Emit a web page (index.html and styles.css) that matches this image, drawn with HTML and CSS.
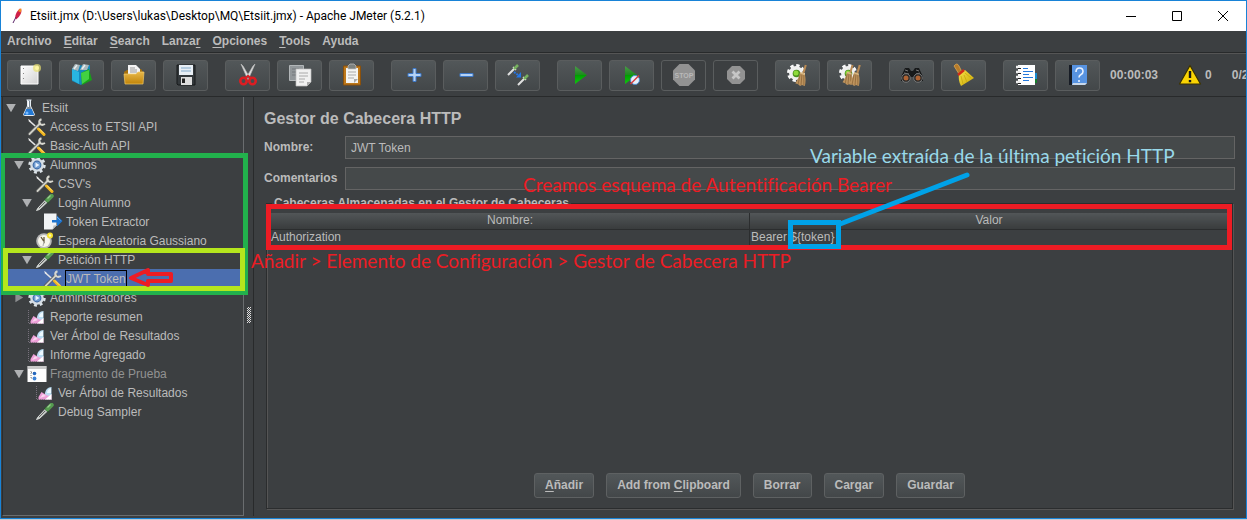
FILE: index.html
```html
<!DOCTYPE html>
<html lang="es">
<head>
<meta charset="utf-8">
<title>Etsiit.jmx - Apache JMeter (5.2.1)</title>
<link rel="stylesheet" href="styles.css">
</head>
<body>
<svg class="defs" aria-hidden="true">
  <defs>
    <linearGradient id="gGreen" x1="0" y1="0" x2="0" y2="1"><stop offset="0" stop-color="#4a9a4a"/><stop offset=".5" stop-color="#1d8a1d"/><stop offset=".52" stop-color="#00a000"/><stop offset="1" stop-color="#10c810"/></linearGradient>
    <linearGradient id="gPaper" x1="0" y1="0" x2="1" y2="1"><stop offset="0" stop-color="#fff"/><stop offset="1" stop-color="#d2d2d2"/></linearGradient>
    <linearGradient id="gFolder" x1="0" y1="0" x2="0" y2="1"><stop offset="0" stop-color="#e8b84a"/><stop offset="1" stop-color="#c08408"/></linearGradient>
    <linearGradient id="gYellow" x1="0" y1="0" x2="1" y2="1"><stop offset="0" stop-color="#f7e34a"/><stop offset="1" stop-color="#c9a400"/></linearGradient>
    <symbol id="tools" viewBox="0 0 20 18">
      <path d="M2 2.500l9 8" stroke="#e4e4e4" stroke-width="1.600"/><path d="M1 1l2 1 1 2-2-1z" fill="#eee"/>
      <path d="M2.500 16L13 5.500" stroke="#555" stroke-width="3.400" stroke-linecap="round"/>
      <path d="M2.500 16L13 5.500" stroke="#cfd0c8" stroke-width="1.800" stroke-linecap="round"/>
      <path d="M14.500 1.200q-3 1-2 4.300 2 2.500 5.500.5" fill="none" stroke="#d8d8d0" stroke-width="2"/>
      <path d="M11.500 11l5.500 5.500" stroke="#f3b61c" stroke-width="3" stroke-linecap="round"/><path d="M12 10.500l5 5" stroke="#ffe27a"/>
    </symbol>
    <symbol id="gear" viewBox="0 0 20 18">
      <circle cx="10" cy="9" r="7.300" fill="none" stroke="#dce3e8" stroke-width="2.800" stroke-dasharray="2.900 2.830"/>
      <circle cx="10" cy="9" r="6.800" fill="#d5dde4"/><circle cx="10" cy="9" r="4.400" fill="#315f9c"/><circle cx="10" cy="9" r="3.500" fill="#6d9bd0"/><path d="M8.500 6.500l4 2.500-4 2.500z" fill="#e8f2ff"/>
    </symbol>
    <symbol id="pipette" viewBox="0 0 20 18">
      <path d="M1.500 16.500l3-1 8-7.500-2-2L3 14z" fill="#bfc4c0" stroke="#e9ecea" stroke-width=".8"/><path d="M4 14l6-6" stroke="#666"/>
      <path d="M9.500 4.500l5 5" stroke="#2e4d31" stroke-width="2"/><path d="M12.500 6l4-4" stroke="#569c50" stroke-width="4.500" stroke-linecap="round"/><path d="M12.500 4.500l3-3" stroke="#9ace90" stroke-width="1.200"/>
    </symbol>
    <symbol id="chart" viewBox="0 0 20 18">
      <path d="M1.500 2v13.500H17" stroke="#77717c" stroke-dasharray="1 1" fill="none"/>
      <path d="M3.500 15.500V13l3-5 3 2 3-3 4 4v4.500z" fill="#ed9fd8"/><path d="M5 14l3-4 3 2z" fill="#fbd5ef"/>
      <path d="M10 10c0-4 3-7 6.500-7v8c-2 1-5 1-6.500-1z" fill="#b9dcf2"/><path d="M12 9c0-3 2-4 4-5v5z" fill="#edf8ff"/><path d="M16.500 10v5.500H10z" fill="#fff"/>
    </symbol>
    <symbol id="flask" viewBox="0 0 20 18">
      <path d="M7.500 1h5M8.500 1v6L4.500 15.500q0 1 1 1h9q1 0 1-1L11.500 7V1" fill="#7d8b98" stroke="#e3ebf2"/><path d="M7.300 10h5.400l2.500 6H4.800z" fill="#2379d5"/><circle cx="8" cy="14" r="1.500" fill="#77baff"/><path d="M9.500 2v6" stroke="#fff"/>
    </symbol>
    <symbol id="extract" viewBox="0 0 20 18">
      <path d="M1 .5h12.500v12l-4 4H1z" fill="#f1f3f5"/><path d="M9.500 16.500l1-4 3.500-.5z" fill="#bbc0c4"/><path d="M9 7h5V2.500l5.500 5.500-5.500 5.500V9.500H9z" fill="#1e74cf"/><path d="M14 4l3.500 3.500" stroke="#66a9ed"/>
    </symbol>
    <symbol id="clock" viewBox="0 0 20 18">
      <circle cx="9" cy="9" r="7.800" fill="#b9b9b9"/><circle cx="9" cy="9" r="6" fill="#f7f5ec"/><path d="M6 5l3 4.500V5" stroke="#65583a" stroke-width="1.300" fill="none"/><path d="M9 9l-1 5" stroke="#aaa"/><circle cx="15" cy="3.500" r="3" fill="#f5e12e"/><circle cx="15" cy="3.500" r="1.200" fill="#fff9ac"/>
    </symbol>
    <symbol id="fragment" viewBox="0 0 20 18">
      <path d="M.5 1h19v16H.5z" fill="#fdfdfd"/><path d="M1 1h18v3H1z" fill="#c9c9c9"/><path d="M4 6v8M4 7.500h4M4 13h4" stroke="#888" stroke-dasharray="1 1"/><circle cx="7.500" cy="8.500" r="1.800" fill="#2466bc"/><circle cx="7.500" cy="13.500" r="1.900" fill="#3b81d5"/>
    </symbol>
    <symbol id="cog" viewBox="0 0 24 24"><circle cx="10" cy="10" r="7.500" fill="none" stroke="#fafafa" stroke-width="3" stroke-dasharray="3.300 2.590"/><circle cx="10" cy="10" r="7" fill="#f0f0f0"/><circle cx="10.500" cy="10.500" r="3.800" fill="#4b901d"/><circle cx="10" cy="10" r="2.500" fill="#8fdb3b"/></symbol>
    <symbol id="broom" viewBox="0 0 14 24"><path d="M12 1L9 11" stroke="#b98a54" stroke-width="2.200"/><path d="M6 9l5 2c1 4 1 8 0 12l-3-1-2 1-2-2-3-1c2-3 4-7 5-11z" fill="#bd935e"/><path d="M6 11L4 21M8 11L7 22M10 11v11" stroke="#8a6537" stroke-width=".8"/><path d="M6 9l5 2" stroke="#d8b781" stroke-width="1.500"/></symbol>
  </defs>
</svg>

<div class="window">
  <header class="titlebar">
    <svg class="feather" viewBox="0 0 12 18"><path d="M9 1.500c3 2 1 7-4 11-2-2 0-8 4-11z" fill="#cf2048"/><path d="M8.500 2c3-2 2 2 1 3.500L7 4z" fill="#f58a28"/><path d="M5 10l-3 6" stroke="#5a2368"/></svg>
    <h1 class="title">Etsiit.jmx (D:\Users\lukas\Desktop\MQ\Etsiit.jmx) - Apache JMeter (5.2.1)</h1>
    <div class="controls">
      <button aria-label="Minimizar"><svg viewBox="0 0 12 12"><path d="M1 6.500h10"/></svg></button>
      <button aria-label="Maximizar"><svg viewBox="0 0 12 12"><path d="M1.500 1.500h9v9h-9z"/></svg></button>
      <button aria-label="Cerrar"><svg viewBox="0 0 12 12"><path d="M1 1l10 10M11 1L1 11"/></svg></button>
    </div>
  </header>

  <nav class="menu">
    <button>Archivo</button><button><u>E</u>ditar</button><button><u>S</u>earch</button><button>Lanza<u>r</u></button><button><u>O</u>pciones</button><button><u>T</u>ools</button><button>Ayuda</button>
  </nav>

  <div class="toolbar">
    <div class="group">
      <button aria-label="Nuevo"><svg viewBox="0 0 24 24"><path d="M3 3h17v18H3z" fill="url(#gPaper)" stroke="#fff"/><path d="M5.500 5v1M5.500 10v1M5.500 15v1" stroke="#888"/><circle cx="19" cy="5" r="4" fill="#e8df70" opacity=".7"/><circle cx="19" cy="5" r="2" fill="#fff7a0"/></svg></button>
      <button aria-label="Plantillas"><svg viewBox="0 0 24 24"><path d="M2 5l7-3 6 1 5-1v12l-9 8-9-4z" fill="#1689bd"/><path d="M2 6l7 3v12l-7-4z" fill="#29b5e0"/><path d="M2 6l3-5 5 1-2 6zM10 7l3-6 6 1-2 5z" fill="#aab7bb"/><path d="M4 6l3-4M12 6l3-4" stroke="#e6eff1" stroke-width="1.500"/><path d="M11 10l8-4 3 11-10 5z" fill="#18a018"/><path d="M11 10l8-3v9l-7 5z" fill="#42d142"/></svg></button>
      <button aria-label="Abrir"><svg viewBox="0 0 24 24"><path d="M2 9l3-2 14-1 2 3v9H3z" fill="#a7710d"/><path d="M6 2h8l4 4v8H6z" fill="#f4f4f4"/><path d="M8 5h5M8 7h7M8 9h7" stroke="#999"/><path d="M2 11h12l2-2h6l-1 12H3z" fill="url(#gFolder)" stroke="#efc967" stroke-width=".7"/></svg></button>
      <button aria-label="Guardar proyecto"><svg viewBox="0 0 24 24"><path d="M3 2h18v20H4l-1-1z" fill="#33383b" stroke="#17191b"/><path d="M5 2h14v10H5z" fill="#e8eef4"/><path d="M7 5h10M7 8h10" stroke="#83aaca"/><path d="M7 14h11v8H7z" fill="#ddd"/><path d="M8 15.500h3V20H8z" fill="#222"/></svg></button>
    </div>
    <div class="group">
      <button aria-label="Cortar"><svg viewBox="0 0 24 24"><path d="M5 1l2 2 7 12-2 2zM19 1l-2 2-7 12 2 2z" fill="#e2e2e2" stroke="#b6b6b6" stroke-width=".7"/><circle cx="7.500" cy="18" r="3.200" fill="none" stroke="#dc1d22" stroke-width="2.600"/><circle cx="16.500" cy="18" r="3.200" fill="none" stroke="#dc1d22" stroke-width="2.600"/><path d="M9 15l3-2 3 2" fill="none" stroke="#dc1d22" stroke-width="2"/></svg></button>
      <button aria-label="Copiar"><svg viewBox="0 0 24 24"><path d="M1.500 2.500h14v15h-14z" fill="#92979a" stroke="#b2b6b8"/><path d="M4 6h7M4 9h4M4 12h4" stroke="#74797c"/><path d="M8 6h15v13l-4 4H8z" fill="#f1f1f1" stroke="#bbb" stroke-width=".7"/><path d="M11 10h9M11 13h9M11 16h6M11 19h5" stroke="#aaa"/><path d="M19 23v-4h4z" fill="#aaa"/></svg></button>
      <button aria-label="Pegar"><svg viewBox="0 0 24 24"><path d="M3.500 3h17v19h-17z" fill="#bd781a" stroke="#8b510c"/><path d="M6 5h12v15H6z" fill="#f4f4f2"/><path d="M8 9h8M8 12h8M8 15h6" stroke="#aaa"/><path d="M14 20v-4h4z" fill="#aaa"/><path d="M8 3l2-2h4l2 2v3H8z" fill="#7d8280" stroke="#c3c3c3" stroke-width=".7"/></svg></button>
    </div>
    <div class="group">
      <button aria-label="Expandir"><svg viewBox="0 0 24 24"><path d="M11 5.500h3v5h5v3h-5v5h-3v-5H6v-3h5z" fill="#b5d2f4" stroke="#3e78c6"/></svg></button>
      <button aria-label="Contraer"><svg viewBox="0 0 24 24"><path d="M6 10.500h13v3H6z" fill="#b5d2f4" stroke="#3e78c6"/></svg></button>
      <button aria-label="Alternar"><svg viewBox="0 0 24 24"><path d="M2 12l7-7M12 22l7-7" stroke="#dfdfdf" stroke-width="2"/><path d="M7 4l3 3M17 14l3 3" stroke="#eef4e6" stroke-width="1.400"/><path d="M8 6l4-4M18 16l4-4" stroke="#77b15f" stroke-width="2.600"/><path d="M8 9l4 3" stroke="#2572df" stroke-width="2" stroke-dasharray="2 1"/><path d="M15 9v5.500H10z" fill="#2477e8"/></svg></button>
    </div>
    <div class="group">
      <button aria-label="Arrancar"><svg viewBox="0 0 24 24"><path d="M7 3l12 9-12 9z" fill="url(#gGreen)"/></svg></button>
      <button aria-label="Arrancar sin pausas"><svg viewBox="0 0 24 24"><path d="M5 3l12 9-12 9z" fill="url(#gGreen)"/><circle cx="15" cy="17" r="4.500" fill="#e5effa" stroke="#4b8bd0"/><path d="M10.500 21L19 12.500" stroke="#d93c3c" stroke-width="1.500"/></svg></button>
      <button disabled aria-label="Parar"><svg viewBox="0 0 24 24"><path d="M7.500 1h9L23 7.500v9L16.500 23h-9L1 16.500v-9z" fill="#929292"/><text x="12" y="15" text-anchor="middle" class="stop-word">STOP</text></svg></button>
      <button disabled aria-label="Interrumpir"><svg viewBox="0 0 24 24"><path d="M8 3h8l5 5v8l-5 5H8l-5-5V8z" fill="#929292"/><path d="M8.500 8.500l7 7M15.500 8.500l-7 7" stroke="#c6c6c6" stroke-width="2.800"/></svg></button>
    </div>
    <div class="group">
      <button aria-label="Limpiar"><svg viewBox="0 0 24 24"><use href="#cog" width="24" height="24"/><use href="#broom" width="14" height="23" x="8" y="1"/></svg></button>
      <button aria-label="Limpiar todo"><svg viewBox="0 0 24 24"><use href="#cog" width="24" height="24"/><use href="#broom" width="14" height="22" x="3" y="1"/><use href="#broom" width="14" height="23" x="10" y="1"/></svg></button>
    </div>
    <div class="group">
      <button aria-label="Buscar"><svg viewBox="0 0 24 24"><path d="M5 5h4l2 3h2l2-3h4l4 9v4h-8l-2-4h-2l-2 4H1v-4z" fill="#17191a"/><path d="M5 7l3 1M16 7l3 1M4 10l5 1M16 11l4-1" stroke="#777"/><circle cx="6" cy="15" r="4.300" fill="#252525" stroke="#777"/><circle cx="18" cy="15" r="4.300" fill="#252525" stroke="#777"/><circle cx="6" cy="15" r="2.500" fill="#ad6334"/><circle cx="18" cy="15" r="2.500" fill="#ad6334"/></svg></button>
      <button aria-label="Limpiar búsqueda"><svg viewBox="0 0 24 24"><path d="M2 3q3-4 5 0l3 6-3 2z" fill="#b77b29" stroke="#e3ad58" stroke-width=".7"/><path d="M7 10l6-3 9 8-13 8q-3-5-2-13z" fill="url(#gYellow)"/><path d="M9 13l2 8M12 12l3 7M13 10l6 5" stroke="#c9a80c" stroke-width=".8"/><path d="M6 12l6-5" stroke="#d12b17" stroke-width="2.500"/></svg></button>
    </div>
    <div class="group">
      <button aria-label="Ayudante de funciones"><svg viewBox="0 0 24 24"><path d="M20 10h3v6h-3z" fill="#198bd0"/><path d="M19 16h4v4h-4z" fill="#177c2c"/><path d="M4 2h17v20H4z" fill="#fff"/><path d="M9 5.500h5M9 8.500h10M9 11.500h6M9 14.500h10M9 17.500h6" stroke="#267adc"/><path d="M2 4h4M2 9h4M2 14h4M2 19h4" stroke="#eee" stroke-width="2.500"/><path d="M4 5.500h3M4 10.500h3M4 15.500h3M4 20.500h3" stroke="#222"/></svg></button>
      <button aria-label="Ayuda"><svg viewBox="0 0 24 24"><path d="M3 2h4v20H3z" fill="#171c25"/><path d="M6 2h15v18l-2 2H6z" fill="#5793e1"/><path d="M6 22l1-2h14l-2 2z" fill="#c9d8ea"/><path d="M10 9q0-4 3.500-4T17 8.500q0 2-2 3t-2 3M13 17v2" fill="none" stroke="#e8f2ff" stroke-width="1.600"/></svg></button>
    </div>
    <div class="status">
      <span>00:00:03</span>
      <span class="warn"><svg viewBox="0 0 24 24"><path d="M12 2.500L22.500 21h-21z" fill="#fad403" stroke="#3a3100" stroke-width="1.200" stroke-linejoin="round"/><path d="M12 8v7M12 17v2.200" stroke="#181818" stroke-width="2.400"/></svg>0</span>
      <span>0/2</span>
    </div>
  </div>

  <div class="body">
    <ul class="tree">
      <li class="l0"><i class="open"></i><svg><use href="#flask"/></svg><span>Etsiit</span></li>
      <li class="l1"><i></i><svg><use href="#tools"/></svg><span>Access to ETSII API</span></li>
      <li class="l1"><i></i><svg><use href="#tools"/></svg><span>Basic-Auth API</span></li>
      <li class="l1"><i class="open"></i><svg><use href="#gear"/></svg><span>Alumnos</span></li>
      <li class="l2"><i></i><svg><use href="#tools"/></svg><span>CSV's</span></li>
      <li class="l2"><i class="open"></i><svg><use href="#pipette"/></svg><span>Login Alumno</span></li>
      <li class="l3"><i></i><svg><use href="#extract"/></svg><span>Token Extractor</span></li>
      <li class="l2"><i></i><svg><use href="#clock"/></svg><span>Espera Aleatoria Gaussiano</span></li>
      <li class="l2"><i class="open"></i><svg><use href="#pipette"/></svg><span>Petición HTTP</span></li>
      <li class="l3 selected"><i></i><svg><use href="#tools"/></svg><span>JWT Token</span></li>
      <li class="l1"><i class="closed"></i><svg><use href="#gear"/></svg><span>Administradores</span></li>
      <li class="l1"><i></i><svg><use href="#chart"/></svg><span>Reporte resumen</span></li>
      <li class="l1"><i></i><svg><use href="#chart"/></svg><span>Ver Árbol de Resultados</span></li>
      <li class="l1"><i></i><svg><use href="#chart"/></svg><span>Informe Agregado</span></li>
      <li class="l1 off"><i class="open"></i><svg><use href="#fragment"/></svg><span>Fragmento de Prueba</span></li>
      <li class="l2"><i></i><svg><use href="#chart"/></svg><span>Ver Árbol de Resultados</span></li>
      <li class="l2"><i></i><svg><use href="#pipette"/></svg><span>Debug Sampler</span></li>
    </ul>
    <div class="splitter"><span></span></div>
    <main class="panel">
      <h2>Gestor de Cabecera HTTP</h2>
      <div class="fields">
        <label for="nombre">Nombre:</label><input id="nombre" type="text" value="JWT Token">
        <label for="comentarios">Comentarios</label><input id="comentarios" type="text">
      </div>
      <section class="headers">
        <h3>Cabeceras Almacenadas en el Gestor de Cabeceras</h3>
        <table>
          <thead><tr><th>Nombre:</th><th>Valor</th></tr></thead>
          <tbody><tr><td>Authorization</td><td>Bearer ${token}</td></tr></tbody>
        </table>
        <div class="actions">
          <button><u>A</u>ñadir</button><button>Add from <u>C</u>lipboard</button><button>Borrar</button><button>Cargar</button><button>Guardar</button>
        </div>
      </section>
    </main>
  </div>

  <div class="marks">
    <div class="box green"></div>
    <div class="box lime"></div>
    <div class="box red"></div>
    <div class="box blue"></div>
    <svg class="drawing"><path d="M840 224L967 175" stroke="#00a2e8" stroke-width="5" stroke-linecap="round"/><path d="M131 278l17-8v4h23v7h-23v4z" fill="none" stroke="#ed1c24" stroke-width="4" stroke-linejoin="round"/></svg>
    <p class="note variable">Variable extraída de la última petición HTTP</p>
    <p class="note scheme">Creamos esquema de Autentificación Bearer</p>
    <p class="note path">Añadir &gt; Elemento de Configuración &gt; Gestor de Cabecera HTTP</p>
  </div>
</div>
</body>
</html>
```
FILE: styles.css
```css
* { box-sizing: border-box; }
body {
  margin: 0;
  padding-bottom: 1px;
  min-height: 100vh;
  display: flex;
  background: #c4ccd2;
  color: #bbbbbb;
  font: 12px/15px "Liberation Sans", Arial, sans-serif;
}
h1, h2, h3, p, ul { margin: 0; padding: 0; }
button { font: inherit; color: inherit; padding: 0; border: 0; background: none; }
u { text-underline-offset: 2px; }
.defs { position: absolute; width: 0; height: 0; }

.window {
  position: relative;
  flex: 1;
  min-width: 0;
  display: flex;
  flex-direction: column;
  overflow: hidden;
  border: 1px solid #1883d7;
  background: #3c3f41;
}

.titlebar { display: flex; align-items: center; height: 30px; padding-left: 10px; background: #fff; color: #000; }
.feather { width: 12px; height: 18px; margin-right: 7px; }
.title { flex: 1; font: 12px/16px Roboto, "Open Sans", sans-serif; }
.controls { display: flex; }
.controls button { width: 46px; height: 28px; display: grid; place-items: center; }
.controls svg { width: 12px; height: 12px; fill: none; stroke: #000; }

.menu { display: flex; gap: 12px; height: 22px; padding: 0 6px; border-bottom: 1px solid #282a2b; font-weight: bold; }

.toolbar { display: flex; align-items: center; gap: 17px; height: 44px; padding: 0 0 0 6px; border-top: 1px solid #555555; border-bottom: 1px solid #282a2b; }
.group { display: flex; gap: 7px; flex: none; }
.group button {
  width: 45px;
  height: 31px;
  display: grid;
  place-items: center;
  border: 1px solid #5a5d5e;
  border-radius: 3px;
  background: linear-gradient(#525759, #434749);
}
.group button:disabled { background: none; }
.group svg, .warn svg { width: 24px; height: 24px; }
.stop-word { font: bold 7px "Liberation Sans", sans-serif; fill: #b9b9b9; }
.status { display: flex; align-items: center; gap: 20px; margin-left: -7px; font-weight: bold; white-space: nowrap; }
.warn { display: flex; align-items: center; gap: 3px; }

.body { flex: 1; display: flex; min-height: 0; padding: 0 3px 2px 1px; }
.tree { width: 242px; flex: none; padding-top: 1px; list-style: none; border: solid #6a6d6f; border-width: 0 1px 1px 0; border-left: 1px solid #2b2d2e; }
.tree li { display: flex; align-items: center; height: 19px; white-space: nowrap; }
.tree svg { width: 20px; height: 18px; margin: 0 2px; flex: none; }
.tree span { padding: 0 1px; line-height: 18px; }
.tree i { width: 12px; height: 12px; flex: none; }
.tree .open { background: #afb1b3; clip-path: polygon(10% 20%, 90% 20%, 50% 90%); }
.tree .closed { background: #8c8e90; clip-path: polygon(20% 10%, 85% 50%, 20% 90%); }
.tree .l0 { padding-left: 2px; }
.tree .l1 { padding-left: 10px; }
.tree .l2 { padding-left: 18px; }
.tree .l3 { padding-left: 26px; }
.tree .off { color: #929292; }
.tree .selected { background: #4b6eaf; }
.tree .selected span { outline: 1px solid #000; outline-offset: -1px; }

.splitter { width: 9px; flex: none; display: grid; place-items: center; padding-top: 16px; }
.splitter span { width: 4px; height: 16px; background: repeating-conic-gradient(#ddd 0 25%, #3c3f41 0 50%) 0 0 / 2px 2px; }

.panel { flex: 1; min-width: 0; display: flex; flex-direction: column; padding: 12px 8px 7px 10px; border-left: 1px solid #282a2b; }
.panel h2 { font-size: 16px; line-height: 20px; }
.fields { display: grid; grid-template-columns: 74px 1fr; gap: 8px 7px; align-items: center; margin-top: 7px; }
.fields label { font-weight: bold; }
.fields input { width: 100%; height: 23px; padding: 0 5px; border: 1px solid #646464; border-radius: 0; background: #45494a; color: inherit; font: inherit; }
.headers { flex: 1; display: flex; flex-direction: column; position: relative; margin: 13px 2px 0; padding: 9px 4px 10px; border: 1px solid #2b2d2e; box-shadow: 1px 1px #555, inset 1px 1px #555; }
.headers h3 { position: absolute; top: -8px; left: 5px; padding: 0 2px; background: #3c3f41; font-size: 12px; line-height: 15px; }
.headers table { width: 100%; table-layout: fixed; border-collapse: collapse; }
.headers th { height: 16px; padding: 0; font-weight: normal; background: linear-gradient(#525658, #393c3d); border-bottom: 1px solid #2b2d2e; }
.headers td { height: 16px; padding: 0; border-bottom: 1px solid #2b2d2e; }
.headers th + th, .headers td + td { border-left: 1px solid #2b2d2e; }
.headers td + td { padding-left: 1px; }
.actions { display: flex; justify-content: center; gap: 12px; margin-top: auto; }
.actions button { height: 25px; padding: 0 10px; border: 1px solid #5e6162; border-radius: 3px; background: linear-gradient(#525759, #434749); font-weight: bold; }

/* Annotations drawn over the window */
.marks { position: absolute; inset: -1px; pointer-events: none; }
.box { position: absolute; border: 5px solid; }
.green { left: 0; top: 153px; width: 248px; height: 142px; color: #22b14c; }
.lime { left: 3px; top: 248px; width: 242px; height: 43px; color: #b5e61d; }
.red { left: 266px; right: 15px; top: 204px; height: 46px; color: #ed1c24; }
.blue { left: 788px; top: 220px; width: 53px; height: 29px; color: #00a2e8; }
.drawing { position: absolute; left: 0; top: 0; width: 100%; height: 100%; }
.note { position: absolute; font: 19px/24px Lato, "Open Sans", sans-serif; font-variant-ligatures: none; white-space: nowrap; }
.variable { left: 810px; top: 144px; color: #99d9ea; }
.scheme { left: 523px; top: 173px; color: #ed1c24; }
.path { left: 251px; top: 249px; color: #ed1c24; }
```
